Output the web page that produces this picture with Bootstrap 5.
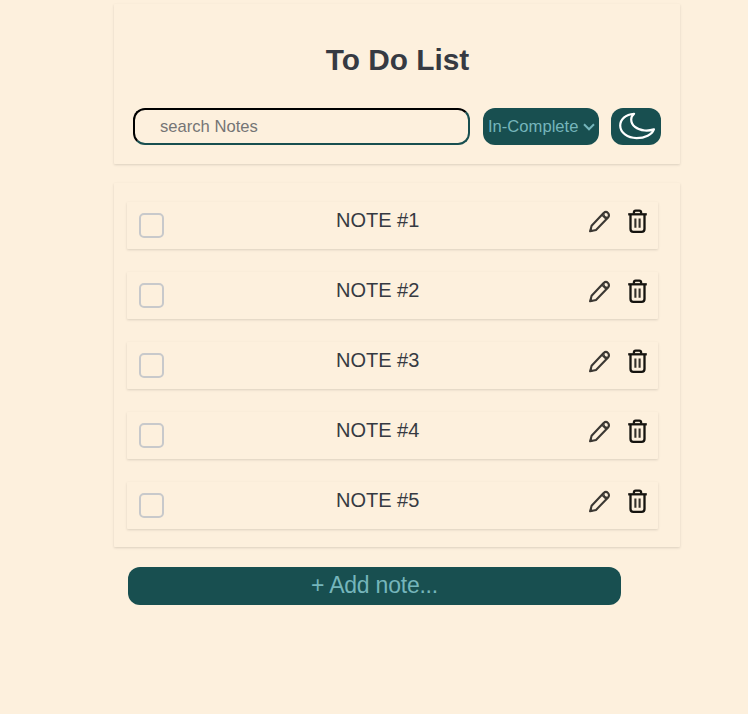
<!DOCTYPE html>
<html lang="en">
<head>
<meta charset="utf-8">
<meta name="viewport" content="width=device-width, initial-scale=1">
<title>To Do List</title>
<link href="https://cdn.jsdelivr.net/npm/bootstrap@5.3.0/dist/css/bootstrap.min.css" rel="stylesheet">
<style>
body{background:#fdf0dd;color:#363a42;font-family:"Liberation Sans",Arial,sans-serif;--teal:#184f50;--aqua:#75b5bb}
.app{width:566px;margin-left:114px;padding-top:4px}
.panel{box-shadow:0 1px 3px rgba(0,0,0,.11),0 1px 2px rgba(0,0,0,.03);border-radius:1px}
.top-panel{height:160px;padding:38px 19px 0 19px}
.top-panel h1{font-size:29.8px;line-height:36px;margin:0 0 30px;padding-left:1px}
.search{width:337px;height:37px;border:2px solid;border-color:#000 var(--teal) var(--teal) #000;border-radius:12px;background:transparent;padding:1px 25px 0;font-size:16.6px;color:#363a42;outline:0}
.search::placeholder{color:#757575;opacity:1}
.filter,.theme,.add{background:var(--teal);color:var(--aqua);border:0;border-radius:12px}
.filter{width:116px;height:37px;margin-left:13px;padding:0 4px 0 5px;font-size:16.6px}
.filter span{padding-top:2px}
.theme{width:50px;height:37px;margin-left:12px;padding:0}
.notes{height:364px;margin-top:19px;padding:19px 22px 0 13px}
.note{height:47px;margin-bottom:23px;padding-left:12px;padding-right:10px}
.note .form-check-input{width:25px;height:25px;margin:11px 0 0;border:2px solid #c8c9cb;border-radius:5px;background-color:transparent}
.note-title{font-size:20px;line-height:24px;padding:6px 0 0;margin-left:172px}
.tools{padding-top:7px}
.tool{padding:0;border:0;background:none;line-height:0}
.trash{margin-left:16px}
.add{width:493px;height:38px;margin:20px 0 0 14px;font-size:23px;letter-spacing:-.22px;line-height:36px;padding:0 0 2px}
</style>
</head>
<body>
<svg class="d-none" xmlns="http://www.w3.org/2000/svg">
<symbol id="pencil" viewBox="0.4 0.3 24 26"><g fill="none" stroke="#3b3833" stroke-width="2.1" stroke-linejoin="round"><path d="M2.600 22.600 4 17 16 4.300q2.400-2.100 4.300-.1t.4 4.400L8.400 21.200Z"/><path d="m14.200 6.200 4.700 4.700M16.200 4.600q-.3 4.300 4.200 4.100" stroke-width="1.4"/></g><path d="m1.500 23.500 1.200-4.200 3.100 2.900z" fill="#3b3833"/></symbol>
<symbol id="trash" viewBox="0 0 20 26"><g fill="none" stroke="#15130f" stroke-width="2.3" stroke-linejoin="round"><path d="M.2 5.300h18.600"/><path d="M5.900 4.700V3.500q0-1.800 1.800-1.800h3.600q1.800 0 1.800 1.800v1.200"/><path d="M2.500 6v14q0 2.900 2.900 2.900h8.200q2.900 0 2.900-2.900V6"/></g><path d="M7.400 9.500v9.200M11.600 9.500v9.200" stroke="#35312b" stroke-width="2.100" fill="none"/></symbol>
</svg>
<main class="app">
  <header class="panel top-panel">
    <h1 class="fw-bold text-center">To Do List</h1>
    <div class="d-flex">
      <input class="search" type="text" placeholder="search Notes" aria-label="Search notes">
      <button class="filter d-flex align-items-center justify-content-between text-nowrap" type="button"><span>In-Complete</span><svg width="12" height="8" viewBox="0 0 12 8" fill="none" stroke="currentColor" stroke-width="2"><path d="m1 1.300 5 5 5-5"/></svg></button>
      <button class="theme d-flex align-items-center justify-content-center" type="button" aria-label="Dark mode"><svg width="38" height="29" viewBox="0 0 38 29" fill="none" stroke="#fff" stroke-width="2.2" stroke-linejoin="round"><path d="M17 1.800C8.500 2.200 3.200 7.800 3.200 13.600c0 7 7.200 12.500 16.400 12.500 8.400 0 15.400-3.500 17.300-8.700-3.200 1-6.200 1.400-9.200 1.100-8-.8-13.500-5.300-13.500-11.100 0-2.100.8-4 2.800-5.600Z"/></svg></button>
    </div>
  </header>
  <section class="panel notes">
    <div class="panel note d-flex align-items-start"><input class="form-check-input" type="checkbox" aria-label="Note 1"><div class="note-title">NOTE #1</div><div class="tools d-flex ms-auto"><button class="tool" type="button" aria-label="Edit"><svg width="24" height="26"><use href="#pencil"/></svg></button><button class="tool trash" type="button" aria-label="Delete"><svg width="20" height="26"><use href="#trash"/></svg></button></div></div>
    <div class="panel note d-flex align-items-start"><input class="form-check-input" type="checkbox" aria-label="Note 2"><div class="note-title">NOTE #2</div><div class="tools d-flex ms-auto"><button class="tool" type="button" aria-label="Edit"><svg width="24" height="26"><use href="#pencil"/></svg></button><button class="tool trash" type="button" aria-label="Delete"><svg width="20" height="26"><use href="#trash"/></svg></button></div></div>
    <div class="panel note d-flex align-items-start"><input class="form-check-input" type="checkbox" aria-label="Note 3"><div class="note-title">NOTE #3</div><div class="tools d-flex ms-auto"><button class="tool" type="button" aria-label="Edit"><svg width="24" height="26"><use href="#pencil"/></svg></button><button class="tool trash" type="button" aria-label="Delete"><svg width="20" height="26"><use href="#trash"/></svg></button></div></div>
    <div class="panel note d-flex align-items-start"><input class="form-check-input" type="checkbox" aria-label="Note 4"><div class="note-title">NOTE #4</div><div class="tools d-flex ms-auto"><button class="tool" type="button" aria-label="Edit"><svg width="24" height="26"><use href="#pencil"/></svg></button><button class="tool trash" type="button" aria-label="Delete"><svg width="20" height="26"><use href="#trash"/></svg></button></div></div>
    <div class="panel note d-flex align-items-start"><input class="form-check-input" type="checkbox" aria-label="Note 5"><div class="note-title">NOTE #5</div><div class="tools d-flex ms-auto"><button class="tool" type="button" aria-label="Edit"><svg width="24" height="26"><use href="#pencil"/></svg></button><button class="tool trash" type="button" aria-label="Delete"><svg width="20" height="26"><use href="#trash"/></svg></button></div></div>
  </section>
  <button class="add d-block text-center" type="button">+ Add note...</button>
</main>
<script src="https://cdn.jsdelivr.net/npm/bootstrap@5.3.0/dist/js/bootstrap.bundle.min.js"></script>
</body>
</html>
